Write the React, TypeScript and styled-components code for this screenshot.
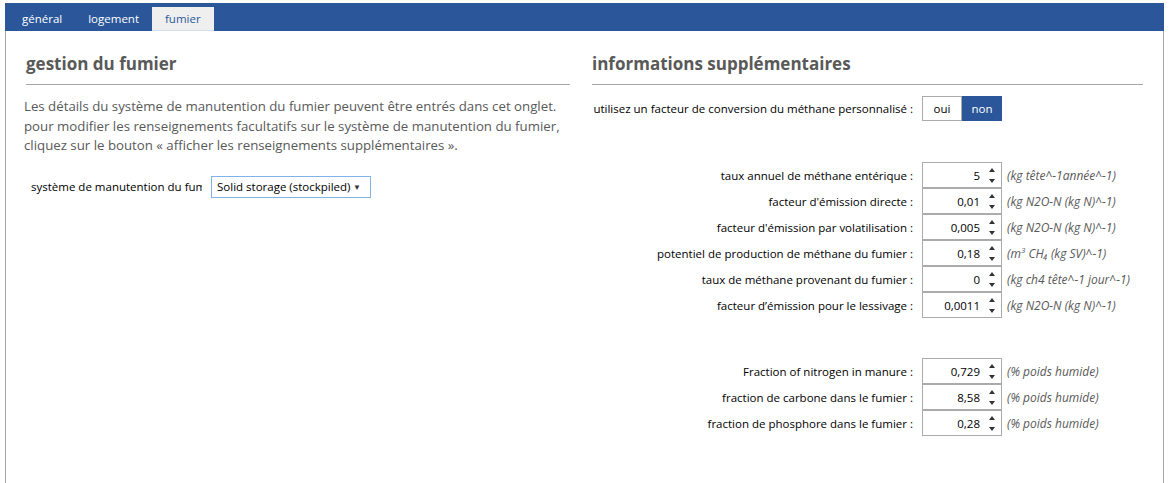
import React from 'react'
import styled, { createGlobalStyle } from 'styled-components'

const GlobalStyle = createGlobalStyle`
  html, body {
    margin: 0;
    padding: 0;
    background: #ffffff;
    height: 100%;
  }
  body {
    font-family: 'Open Sans', 'Noto Sans', sans-serif;
  }
  #root {
    height: 100%;
  }
`

const Frame = styled.div`
  display: flex;
  flex-direction: column;
  height: calc(100% - 3px);
  margin: 3px 6px 0 5px;
`

const TabBar = styled.div`
  background: #2b579a;
  display: flex;
  align-items: flex-end;
  height: 28px;
  padding-left: 4px;
  box-sizing: border-box;
`

const Tab = styled.div<{ active?: boolean }>`
  height: 24px;
  line-height: 24px;
  padding: 0 13px;
  font-size: 11.5px;
  color: ${(props) => (props.active ? '#2b579a' : '#ffffff')};
  background: ${(props) => (props.active ? '#efefef' : 'transparent')};
  border-bottom: ${(props) => (props.active ? '1px solid #d6dde8' : 'none')};
  box-sizing: border-box;
`

const Panel = styled.div`
  flex: 1;
  border-left: 1px solid #a6a6a6;
  border-right: 1px solid #a6a6a6;
  display: grid;
  grid-template-columns: 544px 1fr;
  column-gap: 22px;
  padding: 0 20px;
  align-items: start;
`

const Column = styled.div`
  display: flex;
  flex-direction: column;
`

const Heading = styled.h2`
  margin: 20px 0 0;
  font-size: 17px;
  font-weight: 700;
  color: #595959;
  line-height: 26px;
  padding-bottom: 7px;
  border-bottom: 1px solid #a6a6a6;
`

const Intro = styled.p`
  margin: 12px 0 0 -2px;
  font-size: 13.25px;
  line-height: 19.5px;
  color: #595959;
`

const SelectRow = styled.div`
  display: flex;
  align-items: center;
  margin-top: 20px;
  padding-left: 5px;
  gap: 9px;
`

const FieldLabel = styled.span`
  font-size: 11.5px;
  color: #000000;
  white-space: nowrap;
`

const SelectLabel = styled(FieldLabel)`
  width: 171px;
  overflow: hidden;
`

const SelectBox = styled.div`
  width: 160px;
  height: 22px;
  box-sizing: border-box;
  border: 1px solid #7eb4ea;
  display: flex;
  align-items: center;
  justify-content: space-between;
  padding: 0 9px 0 5px;
  font-size: 11.5px;
  color: #000000;
  white-space: nowrap;
`

const Caret = styled.span`
  font-size: 8px;
  color: #333333;
`

const Grid = styled.div<{ top: number }>`
  display: grid;
  grid-template-columns: 330px 80px auto;
  margin-top: ${(props) => props.top}px;
  align-items: center;
`

const RowLabel = styled(FieldLabel)`
  justify-self: end;
  padding-right: 9px;
`

const Toggle = styled.div`
  display: flex;
  height: 25px;
`

const ToggleButton = styled.div<{ active?: boolean }>`
  width: 40px;
  box-sizing: border-box;
  display: flex;
  align-items: center;
  justify-content: center;
  font-size: 11.5px;
  color: ${(props) => (props.active ? '#ffffff' : '#000000')};
  background: ${(props) => (props.active ? '#2b579a' : '#ffffff')};
  border: 1px solid ${(props) => (props.active ? '#2b579a' : '#ababab')};
`

const NumberBox = styled.div`
  height: 26px;
  width: 80px;
  box-sizing: border-box;
  border: 1px solid #ababab;
  display: flex;
  align-items: center;
  font-size: 11.5px;
  color: #000000;
`

const NumberValue = styled.span`
  flex: 1;
  text-align: right;
  padding-right: 8px;
`

const Spinner = styled.div`
  width: 8px;
  display: flex;
  flex-direction: column;
  align-items: center;
  gap: 7px;
  margin-right: 5px;
`

const Unit = styled.span`
  font-size: 12px;
  font-style: italic;
  color: #595959;
  padding-left: 5px;
  white-space: nowrap;
`

const Arrow = ({ up }: { up?: boolean }) => (
  <svg width="6" height="4" viewBox="0 0 6 4">
    <polygon points={up ? '3,0 6,4 0,4' : '0,0 6,0 3,4'} fill="#333333" />
  </svg>
)

type Field = { label: string; value: string; unit: React.ReactNode }

const emissionFields: Field[] = [
  { label: 'taux annuel de méthane entérique :', value: '5', unit: '(kg tête^-1année^-1)' },
  { label: "facteur d'émission directe :", value: '0,01', unit: '(kg N2O-N (kg N)^-1)' },
  { label: "facteur d'émission par volatilisation :", value: '0,005', unit: '(kg N2O-N (kg N)^-1)' },
  {
    label: 'potentiel de production de méthane du fumier :',
    value: '0,18',
    unit: (
      <>
        (m<sup style={{ fontSize: 8 }}>3</sup> CH₄ (kg SV)^-1)
      </>
    ),
  },
  { label: 'taux de méthane provenant du fumier :', value: '0', unit: '(kg ch4 tête^-1 jour^-1)' },
  { label: 'facteur d’émission pour le lessivage :', value: '0,0011', unit: '(kg N2O-N (kg N)^-1)' },
]

const fractionFields: Field[] = [
  { label: 'Fraction of nitrogen in manure :', value: '0,729', unit: '(% poids humide)' },
  { label: 'fraction de carbone dans le fumier :', value: '8,58', unit: '(% poids humide)' },
  { label: 'fraction de phosphore dans le fumier :', value: '0,28', unit: '(% poids humide)' },
]

const FieldRows = ({ fields }: { fields: Field[] }) => (
  <>
    {fields.map((field) => (
      <React.Fragment key={field.label}>
        <RowLabel>{field.label}</RowLabel>
        <NumberBox>
          <NumberValue>{field.value}</NumberValue>
          <Spinner>
            <Arrow up />
            <Arrow />
          </Spinner>
        </NumberBox>
        <Unit>{field.unit}</Unit>
      </React.Fragment>
    ))}
  </>
)

export default function App() {
  return (
    <>
      <GlobalStyle />
      <Frame>
        <TabBar>
          <Tab>général</Tab>
          <Tab>logement</Tab>
          <Tab active>fumier</Tab>
        </TabBar>
        <Panel>
          <Column>
            <Heading>gestion du fumier</Heading>
            <Intro>
              Les détails du système de manutention du fumier peuvent être entrés dans cet onglet.
              <br />
              pour modifier les renseignements facultatifs sur le système de manutention du fumier,
              <br />
              cliquez sur le bouton « afficher les renseignements supplémentaires ».
            </Intro>
            <SelectRow>
              <SelectLabel>système de manutention du fumier :</SelectLabel>
              <SelectBox>
                Solid storage (stockpiled)
                <Caret>▼</Caret>
              </SelectBox>
            </SelectRow>
          </Column>
          <Column>
            <Heading>informations supplémentaires</Heading>
            <Grid top={11}>
              <RowLabel>utilisez un facteur de conversion du méthane personnalisé :</RowLabel>
              <Toggle>
                <ToggleButton>oui</ToggleButton>
                <ToggleButton active>non</ToggleButton>
              </Toggle>
              <span />
            </Grid>
            <Grid top={41}>
              <FieldRows fields={emissionFields} />
            </Grid>
            <Grid top={40}>
              <FieldRows fields={fractionFields} />
            </Grid>
          </Column>
        </Panel>
      </Frame>
    </>
  )
}
